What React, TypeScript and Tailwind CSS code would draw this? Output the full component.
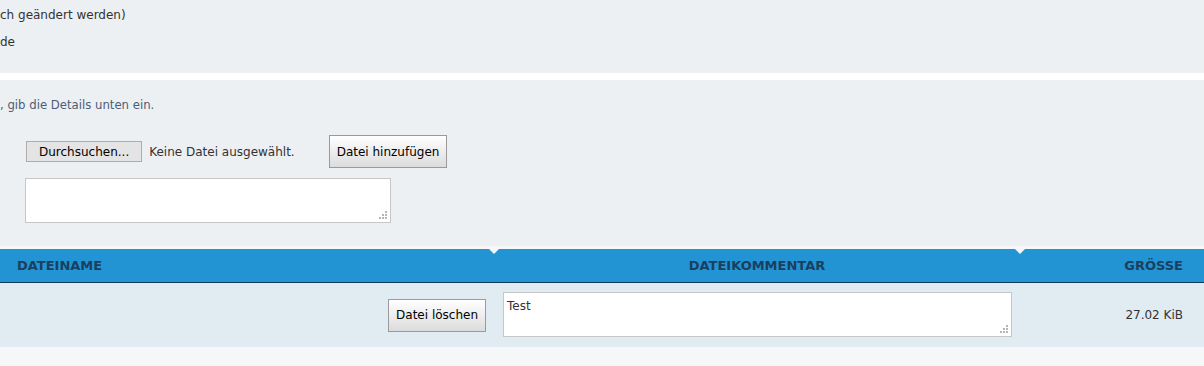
function Grip() {
  return (
    <svg className="absolute right-[3px] bottom-[3px]" width="8" height="8" viewBox="0 0 8 8">
      <rect x="6" y="0" width="2" height="2" fill="#b5b5b5" />
      <rect x="3" y="3" width="2" height="2" fill="#b5b5b5" />
      <rect x="6" y="3" width="2" height="2" fill="#b5b5b5" />
      <rect x="0" y="6" width="2" height="2" fill="#b5b5b5" />
      <rect x="3" y="6" width="2" height="2" fill="#b5b5b5" />
      <rect x="6" y="6" width="2" height="2" fill="#b5b5b5" />
    </svg>
  );
}

function Notch() {
  return (
    <span className="absolute top-0 -left-[5px] w-0 h-0 border-l-[5px] border-r-[5px] border-t-[5px] border-l-transparent border-r-transparent border-t-[#f3f5f7]"></span>
  );
}

export default function App() {
  return (
    <div className="w-[1204px] h-[366px] overflow-hidden bg-[#f6f7f8] font-['DejaVu_Sans',sans-serif] text-[12px] text-[#333]">
      <div className="h-[73px] bg-[#ecf0f3] pt-[6px]">
        <div className="leading-[18px]">ch geändert werden)</div>
        <div className="leading-[18px] mt-[9px]">de</div>
      </div>
      <div className="h-[7px] bg-white"></div>
      <div className="h-[166px] bg-[#ecf0f3] pt-[17px]">
        <div className="leading-[16px] text-[11.7px] text-[#4c5d77]">, gib die Details unten ein.</div>
        <div className="flex items-center mt-[22px] pl-[26px] h-[33px]">
          <button className="h-[21px] px-[12px] bg-[#e4e4e4] border border-[#adadad] text-black leading-none">Durchsuchen...</button>
          <span className="ml-[7px] text-[#333]">Keine Datei ausgewählt.</span>
          <button className="ml-[34px] h-[33px] px-[7px] bg-gradient-to-b from-white to-[#dcdcdc] border border-[#9a9a9a] text-black leading-none">Datei hinzufügen</button>
        </div>
        <div className="relative ml-[25px] mt-[10px] w-[366px] h-[45px] bg-white border border-[#c7c7c7]">
          <Grip />
        </div>
      </div>
      <div className="h-[3px]"></div>
      <div className="flex h-[34px] bg-[#2294d3] border-b border-[#11395a] text-[#1b3f5f] font-bold text-[13px]">
        <div className="w-[494px] pl-[17px] flex items-center">DATEINAME</div>
        <div className="relative w-[526px] flex items-center justify-center">
          <Notch />
          DATEIKOMMENTAR
        </div>
        <div className="relative flex-1 flex items-center justify-end pr-[21px]">
          <Notch />
          GRÖSSE
        </div>
      </div>
      <div className="flex h-[64px] bg-[#e1ebf2]">
        <div className="w-[494px] flex items-center justify-end pr-[8px]">
          <button className="h-[33px] px-[7px] bg-gradient-to-b from-white to-[#dcdcdc] border border-[#9a9a9a] text-black leading-none">Datei löschen</button>
        </div>
        <div className="w-[526px] pl-[9px] pt-[9px]">
          <div className="relative w-[509px] h-[45px] bg-white border border-[#c7c7c7] px-[3px] pt-[6px] leading-[14px]">
            Test
            <Grip />
          </div>
        </div>
        <div className="flex-1 flex items-center justify-end pr-[21px]">27.02 KiB</div>
      </div>
    </div>
  );
}
